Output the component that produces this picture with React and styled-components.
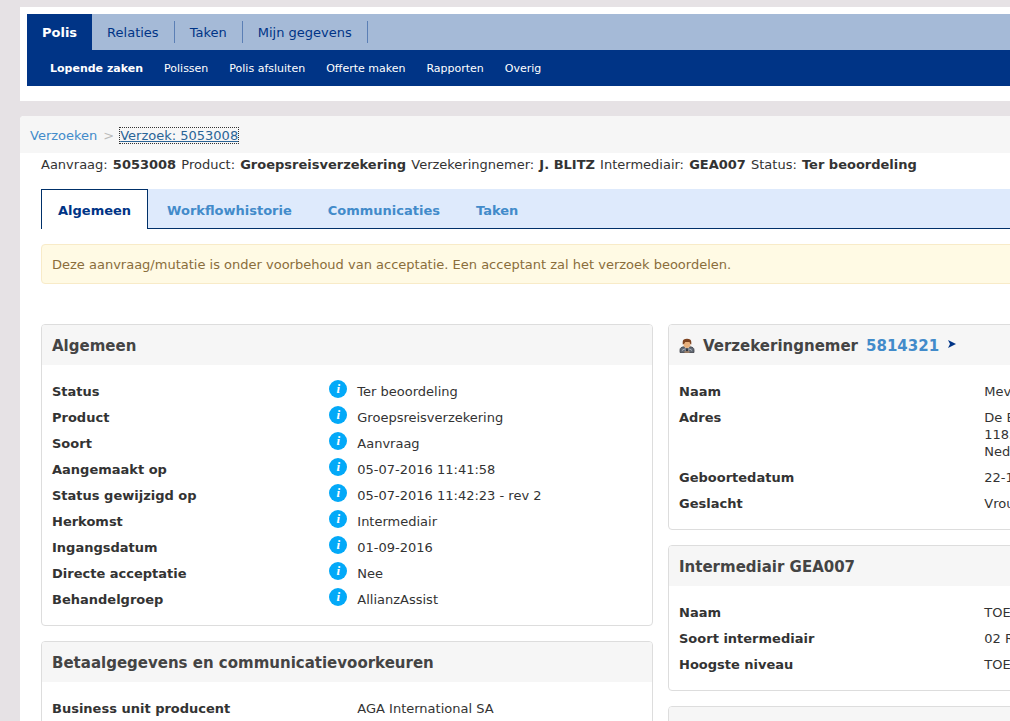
import styled, { createGlobalStyle } from "styled-components";

const GlobalStyle = createGlobalStyle`
  * {
    box-sizing: border-box;
  }
  body {
    margin: 0;
    overflow-x: hidden;
    background: #e6e2e5;
    color: #333;
    font-family: Verdana, "DejaVu Sans", sans-serif;
    font-size: 13px;
    line-height: 17px;
  }
  a {
    color: #428bca;
    text-decoration: none;
  }
`;

const Page = styled.div`
  min-width: 1301px;
  padding: 7px 0 0 20px;
`;
const Header = styled.header`
  padding: 7px 0 15px 7px;
  margin-bottom: 15px;
  background: #fff;
`;
const MainNav = styled.nav`
  display: flex;
  align-items: center;
  height: 36px;
  background: #a5bad7;
`;
const MainLink = styled.a`
  display: flex;
  align-items: center;
  height: ${(p) => (p.$active ? "36px" : "22px")};
  padding: 0 15px;
  border-right: ${(p) => (p.$active ? "none" : "1px solid #5b7fb5")};
  background: ${(p) => (p.$active ? "#003486" : "transparent")};
  color: ${(p) => (p.$active ? "#fff" : "#003486")};
  font-weight: ${(p) => (p.$active ? "bold" : "normal")};
`;
const SubNav = styled.nav`
  display: flex;
  align-items: center;
  gap: 21px;
  height: 36px;
  padding-left: 23px;
  background: #003486;
  font-size: 11px;
`;
const SubLink = styled.a`
  color: #fff;
  font-weight: ${(p) => (p.$active ? "bold" : "normal")};
`;

const Content = styled.main`
  background: #fff;
  border-radius: 4px 0 0 0;
`;
const Breadcrumb = styled.nav`
  display: flex;
  align-items: center;
  gap: 6px;
  height: 37px;
  padding: 2px 10px 0;
  border-radius: 4px 0 0 0;
  background: #f6f6f6;
`;
const Separator = styled.span`
  color: #bbb;
`;
const CurrentLink = styled.a`
  color: #2a6496;
  line-height: 15px;
  text-decoration: underline;
  outline: 1px dotted #333;
`;
const Body = styled.div`
  padding: 3px 21px 21px;
`;
const Summary = styled.p`
  margin: 0 0 16px;

  b {
    margin: 0 1px;
  }
`;

const Tabs = styled.nav`
  display: flex;
  height: 40px;
  margin-bottom: 15px;
  border-bottom: 1px solid #003069;
  background: #deeafc;
`;
const Tab = styled.a`
  display: flex;
  align-items: center;
  height: 40px;
  padding: 2px 16px 0;
  margin-right: 2px;
  border: 1px solid ${(p) => (p.$active ? "#003069" : "transparent")};
  border-bottom: none;
  background: ${(p) => (p.$active ? "#fff" : "transparent")};
  color: ${(p) => (p.$active ? "#003486" : "#428bca")};
  font-weight: bold;
`;
const Alert = styled.div`
  padding: 11px 10px 10px;
  margin-bottom: 40px;
  border: 1px solid #f8ebc8;
  border-radius: 4px;
  background: #fffae4;
  color: #8a6d3b;
`;

const Columns = styled.div`
  display: grid;
  grid-template-columns: 1fr 1fr;
  gap: 15px;
`;
const Column = styled.div`
  display: flex;
  flex-direction: column;
  gap: 15px;
`;
const Panel = styled.section`
  border: 1px solid #ddd;
  border-radius: 4px;
`;
const PanelTitle = styled.h2`
  display: flex;
  align-items: center;
  gap: 8px;
  height: 40px;
  padding: 2px 10px 0;
  margin: 0;
  border-radius: 3px 3px 0 0;
  background: #f6f6f6;
  color: #444;
  font-size: 15px;
  line-height: 20px;
`;
const Fields = styled.dl`
  padding: 14px 10px 12px;
  margin: 0;
`;
const Row = styled.div`
  display: flex;
  align-items: flex-start;
  padding: 4px 0 5px;
`;
const Label = styled.dt`
  flex: 0 0 47%;
  font-weight: bold;
`;
const Value = styled.dd`
  display: grid;
  grid-template-columns: 18px 1fr;
  gap: 10px;
  flex: 1;
  margin: 0;
`;
const Lines = styled.span`
  grid-column: 2;
  white-space: pre-line;
`;
const InfoButton = styled.button`
  width: 18px;
  height: 18px;
  padding: 0;
  margin: -3px 0 0;
  border: none;
  border-radius: 50%;
  background: #03a9f8;
  color: #fff;
  font: italic bold 13px/18px "Liberation Serif", serif;
  text-align: center;
`;

function PersonIcon() {
  return (
    <svg width="16" height="16" viewBox="0 0 16 16">
      <path
        d="M1 14.5V12c0-2 1.300-3 4-3.200h6c2.700.2 4 1.200 4 3.200v2.500Z"
        fill="#626a75"
        stroke="#3d4048"
        strokeWidth=".8"
      />
      <path d="M5.500 8.500h5L8 12.500Z" fill="#d9dde2" />
      <path d="M7.300 10h1.400l.5 3.500H6.800Z" fill="#30343c" />
      <path d="M4.500 4h7v2.500C11.500 8.500 10 10 8 10S4.500 8.500 4.500 6.500Z" fill="#e8b07c" />
      <path
        d="M3.700 6.500V4c0-2.200 1.700-3.300 4.300-3.300s4.300 1.100 4.300 3.300v2.500l-1.100-.8-.7-1.700H6.200l-1 1.700Z"
        fill="#7d4320"
      />
      <path d="M3 12.500l2.200-1.500 1.600 1.300M13 12.500l-2.200-1.500-1.600 1.300" fill="none" stroke="#aeb3ba" />
      <path d="M5.500 14h5" stroke="#d9a06c" />
    </svg>
  );
}

function ArrowIcon() {
  return (
    <svg width="10" height="14" viewBox="0 0 10 14">
      <path d="M1 1l8 4-8 4 2-4Z" fill="#003486" />
    </svg>
  );
}

const mainLinks = ["Polis", "Relaties", "Taken", "Mijn gegevens"];
const subLinks = [
  "Lopende zaken",
  "Polissen",
  "Polis afsluiten",
  "Offerte maken",
  "Rapporten",
  "Overig",
];
const tabs = ["Algemeen", "Workflowhistorie", "Communicaties", "Taken"];

const general = [
  ["Status", "Ter beoordeling"],
  ["Product", "Groepsreisverzekering"],
  ["Soort", "Aanvraag"],
  ["Aangemaakt op", "05-07-2016 11:41:58"],
  ["Status gewijzigd op", "05-07-2016 11:42:23 - rev 2"],
  ["Herkomst", "Intermediair"],
  ["Ingangsdatum", "01-09-2016"],
  ["Directe acceptatie", "Nee"],
  ["Behandelgroep", "AllianzAssist"],
];
const payment = [["Business unit producent", "AGA International SA"]];
const holder = [
  ["Naam", "Mevr"],
  ["Adres", "De E\n1183\nNede"],
  ["Geboortedatum", "22-1"],
  ["Geslacht", "Vrouw"],
];
const broker = [
  ["Naam", "TOE"],
  ["Soort intermediair", "02 R"],
  ["Hoogste niveau", "TOE"],
];

function FieldList({ rows, info }) {
  return (
    <Fields>
      {rows.map(([label, value]) => (
        <Row key={label}>
          <Label>{label}</Label>
          <Value>
            {info && (
              <InfoButton type="button" aria-label={`Info ${label}`}>
                i
              </InfoButton>
            )}
            <Lines>{value}</Lines>
          </Value>
        </Row>
      ))}
    </Fields>
  );
}

function App() {
  return (
    <>
      <GlobalStyle />
      <Page>
        <Header>
          <MainNav>
            {mainLinks.map((name, i) => (
              <MainLink key={name} href="#" $active={i === 0}>
                {name}
              </MainLink>
            ))}
          </MainNav>
          <SubNav>
            {subLinks.map((name, i) => (
              <SubLink key={name} href="#" $active={i === 0}>
                {name}
              </SubLink>
            ))}
          </SubNav>
        </Header>
        <Content>
          <Breadcrumb>
            <a href="#">Verzoeken</a>
            <Separator>&gt;</Separator>
            <CurrentLink href="#">Verzoek: 5053008</CurrentLink>
          </Breadcrumb>
          <Body>
            <Summary>
              Aanvraag: <b>5053008</b> Product: <b>Groepsreisverzekering</b>{" "}
              Verzekeringnemer: <b>J. BLITZ</b> Intermediair: <b>GEA007</b>{" "}
              Status: <b>Ter beoordeling</b>
            </Summary>
            <Tabs>
              {tabs.map((name, i) => (
                <Tab key={name} href="#" $active={i === 0}>
                  {name}
                </Tab>
              ))}
            </Tabs>
            <Alert>
              Deze aanvraag/mutatie is onder voorbehoud van acceptatie. Een
              acceptant zal het verzoek beoordelen.
            </Alert>
            <Columns>
              <Column>
                <Panel>
                  <PanelTitle>Algemeen</PanelTitle>
                  <FieldList rows={general} info />
                </Panel>
                <Panel>
                  <PanelTitle>
                    Betaalgegevens en communicatievoorkeuren
                  </PanelTitle>
                  <FieldList rows={payment} />
                </Panel>
              </Column>
              <Column>
                <Panel>
                  <PanelTitle>
                    <PersonIcon />
                    Verzekeringnemer <a href="#">5814321</a>
                    <ArrowIcon />
                  </PanelTitle>
                  <FieldList rows={holder} />
                </Panel>
                <Panel>
                  <PanelTitle>Intermediair GEA007</PanelTitle>
                  <FieldList rows={broker} />
                </Panel>
                <Panel>
                  <PanelTitle as="div" />
                </Panel>
              </Column>
            </Columns>
          </Body>
        </Content>
      </Page>
    </>
  );
}

export default App;
